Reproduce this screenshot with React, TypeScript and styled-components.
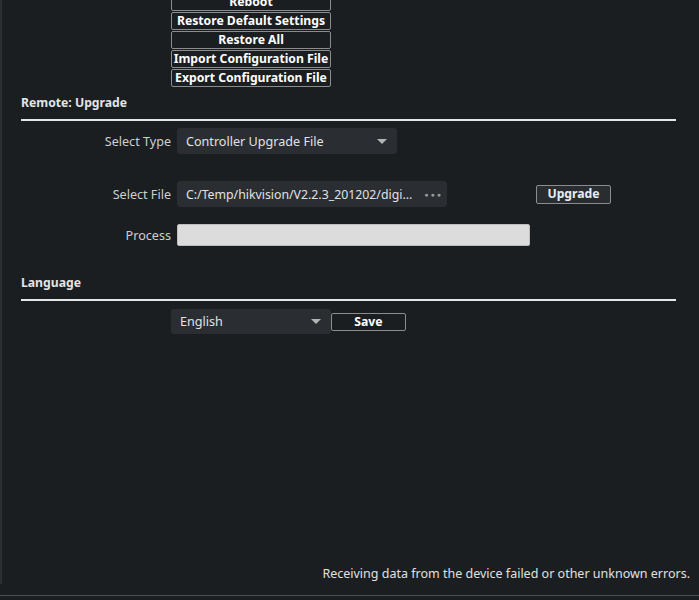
import React from "react";
import styled, { createGlobalStyle } from "styled-components";

const Global = createGlobalStyle`
  html, body { margin: 0; padding: 0; background: #1b1e21; overflow: hidden; }
  body { font-family: "Noto Sans", "Open Sans", Arial, sans-serif; }
  #root { height: 600px; }
`;

const Shell = styled.div`
  height: 600px;
  display: flex;
  flex-direction: column;
  background: #1b1e21;
  color: #d6d6d6;
  overflow: hidden;
`;

const Main = styled.div`
  height: 595px;
  display: flex;
  border-bottom: 1px solid #4b4e52;
`;

const LeftStrip = styled.div`
  width: 2px;
  height: 584px;
  flex-shrink: 0;
  background: #2b2f33;
`;

const Content = styled.div`
  flex: 1;
  display: flex;
  flex-direction: column;
  padding-left: 19px;
  padding-right: 23px;
`;

const ButtonStack = styled.div`
  display: flex;
  flex-direction: column;
  gap: 1px;
  margin-top: -7px;
  margin-left: 150px;
  width: 160px;
`;

const OutlineButton = styled.button<{ $w?: number }>`
  box-sizing: border-box;
  height: 18px;
  width: ${(p) => (p.$w ? `${p.$w}px` : "100%")};
  padding: 0;
  background: #1b1e21;
  border: 1px solid #8c8c8c;
  border-radius: 2px;
  color: #ffffff;
  font-family: "Noto Sans", Arial, sans-serif;
  font-weight: 700;
  font-size: 12.2px;
  line-height: 16px;
  white-space: nowrap;
  text-align: center;
  cursor: pointer;
`;

const SectionTitle = styled.div<{ $top: number }>`
  margin-top: ${(p) => p.$top}px;
  font-weight: 700;
  font-size: 12.2px;
  line-height: 16px;
  color: #e4e4e4;
`;

const Divider = styled.div`
  height: 2px;
  background: #e6e6e6;
  margin-top: 8px;
`;

const Row = styled.div<{ $top: number }>`
  display: flex;
  align-items: center;
  margin-top: ${(p) => p.$top}px;
`;

const Label = styled.div`
  width: 150px;
  text-align: right;
  font-size: 12.6px;
  color: #cfcfcf;
  margin-right: 6px;
  white-space: nowrap;
`;

const Field = styled.div<{ $w: number; $h?: number; $pad?: number }>`
  box-sizing: border-box;
  width: ${(p) => p.$w}px;
  height: ${(p) => p.$h ?? 26}px;
  background: #2a2d32;
  border-radius: 3px;
  display: flex;
  align-items: center;
  padding-left: ${(p) => p.$pad ?? 9}px;
  padding-right: 10px;
  font-size: 12.6px;
  color: #e2e2e2;
  white-space: nowrap;
`;

const FieldText = styled.span<{ $size?: number }>`
  flex: 1;
  overflow: hidden;
  font-size: ${(p) => p.$size ?? 12.6}px;
`;

const Arrow = styled.span`
  width: 0;
  height: 0;
  border-left: 5px solid transparent;
  border-right: 5px solid transparent;
  border-top: 5px solid #b4b4b4;
`;

const Dots = styled.span`
  color: #9a9a9a;
  font-size: 7px;
  letter-spacing: 2px;
  margin-left: 8px;
  margin-right: -6px;
`;

const Progress = styled.div`
  box-sizing: border-box;
  width: 353px;
  height: 22px;
  background: #dcdcdc;
  border: 1px solid #bdbdbd;
  border-radius: 2px;
`;

const Spacer = styled.div<{ $w: number }>`
  width: ${(p) => p.$w}px;
`;

const UpgradeButton = styled(OutlineButton)`
  background: #2a2d30;
  color: #e6eef8;
  height: 19px;
`;

const LangRow = styled.div`
  display: flex;
  align-items: center;
  margin-top: 8px;
  margin-left: 150px;
`;

const Message = styled.div`
  margin-top: auto;
  margin-bottom: 13px;
  text-align: right;
  font-size: 12.5px;
  color: #e0e0e0;
  margin-right: -14px;
`;

export default function App() {
  return (
    <>
      <Global />
      <Shell>
        <Main>
          <LeftStrip />
          <Content>
            <ButtonStack>
              <OutlineButton>Reboot</OutlineButton>
              <OutlineButton>Restore Default Settings</OutlineButton>
              <OutlineButton>Restore All</OutlineButton>
              <OutlineButton>Import Configuration File</OutlineButton>
              <OutlineButton>Export Configuration File</OutlineButton>
            </ButtonStack>

            <SectionTitle $top={8}>Remote: Upgrade</SectionTitle>
            <Divider />

            <Row $top={7}>
              <Label>Select Type</Label>
              <Field $w={220}>
                <FieldText>Controller Upgrade File</FieldText>
                <Arrow />
              </Field>
            </Row>

            <Row $top={27}>
              <Label>Select File</Label>
              <Field $w={270}>
                <FieldText $size={12.3}>C:/Temp/hikvision/V2.2.3_201202/digi...</FieldText>
                <Dots>●●●</Dots>
              </Field>
              <Spacer $w={89} />
              <UpgradeButton $w={75}>Upgrade</UpgradeButton>
            </Row>

            <Row $top={17}>
              <Label>Process</Label>
              <Progress />
            </Row>

            <SectionTitle $top={29}>Language</SectionTitle>
            <Divider />

            <LangRow>
              <Field $w={160} $h={25} $pad={9}>
                <FieldText>English</FieldText>
                <Arrow />
              </Field>
              <OutlineButton $w={75}>Save</OutlineButton>
            </LangRow>

            <Message>Receiving data from the device failed or other unknown errors.</Message>
          </Content>
        </Main>
      </Shell>
    </>
  );
}
